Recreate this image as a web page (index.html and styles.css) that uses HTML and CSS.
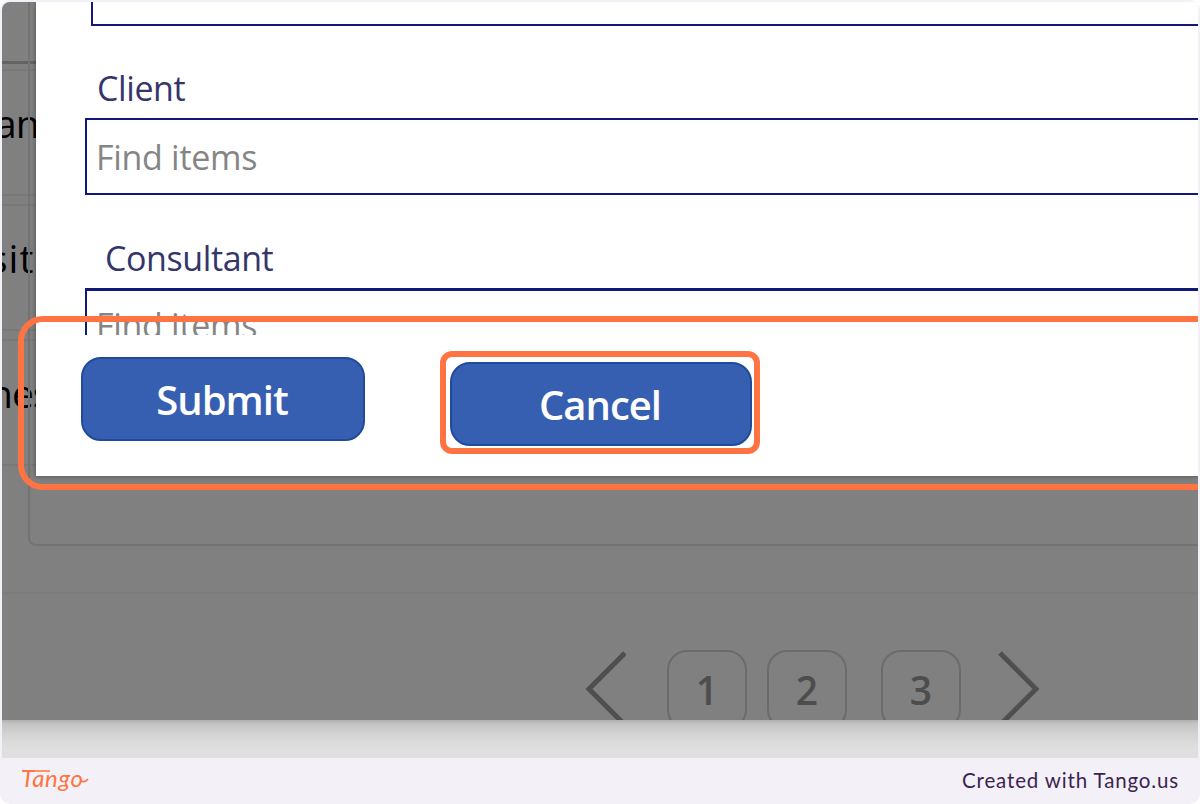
FILE: index.html
```html
<!DOCTYPE html>
<html lang="en">
<head>
  <meta charset="UTF-8">
  <meta name="viewport" content="width=device-width, initial-scale=1.0">
  <title>Cancel</title>
  <link rel="stylesheet" href="styles.css">
</head>
<body>
  <div class="card">
    <main class="shot">
      <div class="page">
        <div class="list">
          <div class="row first"></div>
          <div class="row"><span class="an">an</span></div>
          <div class="row"><span class="site">site</span></div>
          <div class="row last"><span class="nes">nes</span></div>
        </div>
        <nav class="pager">
          <svg class="arrow" width="42" height="76" viewBox="0 0 42 76"><path d="M41 2 5 38l36 36"/></svg>
          <span class="num">1</span>
          <span class="num">2</span>
          <span class="num wide">3</span>
          <svg class="arrow next" width="42" height="76" viewBox="0 0 42 76"><path d="M3 2l36 36L3 74"/></svg>
        </nav>
        <div class="panel"></div>
      </div>
      <div class="below"></div>

      <div class="modal">
        <div class="fields">
          <div class="field top"></div>
          <label class="label">Client</label>
          <div class="field"><span>Find items</span></div>
          <label class="label consultant">Consultant</label>
          <div class="field cut"><span>Find items</span></div>
        </div>
        <div class="actions">
          <button class="btn submit">Submit</button>
          <button class="btn cancel">Cancel</button>
        </div>
      </div>
      <div class="ring area"></div>
      <div class="ring target"></div>
    </main>
    <footer>
      <svg class="logo" width="72" height="36" viewBox="0 0 72 36">
        <text x="1" y="20" textLength="62">Tango</text>
        <path d="M2 4h28M61 14q4 2 7-2"/>
      </svg>
      <p>Created with Tango.us</p>
    </footer>
  </div>
</body>
</html>
```

FILE: styles.css
```css
* {
  box-sizing: border-box;
}
body {
  margin: 0;
  background: #fff;
  font-family: 'Open Sans', 'Noto Sans', sans-serif;
  overflow: hidden;
}
.card {
  display: flex;
  flex-direction: column;
  height: 804px;
  padding: 2px 2px 0;
  background: #f3f1f7;
  border-radius: 10px;
}
.shot {
  position: relative;
  height: 756px;
  overflow: hidden;
  border-radius: 8px 0 0 0;
  background: #dfdfdf;
}

/* dimmed page behind the dialog */
.page {
  position: relative;
  display: flex;
  flex-direction: column;
  height: 718px;
  overflow: hidden;
  background: #808080;
}
.list {
  flex: none;
  height: 592px;
  border-bottom: 2px solid #7c7c7c;
}
.row {
  height: 127px;
  margin-bottom: 8px;
  padding-top: 25px;
  border-top: 2px solid #797979;
  border-bottom: 2px solid #797979;
  font-size: 39px;
  font-weight: 500;
  line-height: 54px;
  letter-spacing: -1px;
  color: #000;
  white-space: nowrap;
}
.row.first {
  height: 62px;
  margin-bottom: 5px;
  border-top: 0;
  border-bottom: 3px solid #636363;
}
.row span {
  display: block;
}
.an {
  margin-left: -7px;
}
.site {
  margin-left: -13px;
  letter-spacing: 1px;
}
.nes {
  margin-left: -13px;
}
.panel {
  position: absolute;
  left: 26px;
  top: -20px;
  width: 1300px;
  height: 564px;
  border: 2px solid #737373;
  border-radius: 8px;
}
.pager {
  display: flex;
  flex: none;
  align-items: flex-start;
  padding: 56px 0 0 582px;
}
.arrow {
  flex: none;
  margin-top: 1px;
  fill: none;
  stroke: #4f4f4f;
  stroke-width: 5;
}
.num {
  flex: none;
  width: 80px;
  height: 80px;
  margin-left: 20px;
  border: 2px solid #6b6b6b;
  border-radius: 20px;
  font-size: 39px;
  font-weight: 600;
  line-height: 75px;
  text-align: center;
  color: #4d4d4d;
}
.arrow + .num {
  margin-left: 41px;
}
.num.wide {
  margin-left: 34px;
}
.arrow.next {
  margin-left: 36px;
}
.below {
  height: 38px;
  background: linear-gradient(#b0b0b0, #c3c3c3 10%, #d5d5d5 40%, #dfdfdf 75%);
}

/* dialog */
.modal {
  position: absolute;
  left: 34px;
  top: 0;
  right: 0;
  height: 474px;
  background: #fff;
  box-shadow: 0 0 5px rgba(0, 0, 0, 0.4);
}
.fields {
  height: 333px;
  padding-left: 49px;
  overflow: hidden;
}
.field {
  width: 1200px;
  height: 77px;
  padding-left: 9px;
  border: 2px solid #101878;
  font-size: 34px;
  line-height: 74px;
  letter-spacing: -0.3px;
  color: #858585;
}
.field.top {
  height: 24px;
  margin-left: 6px;
  border-top: 0;
}
.label {
  display: block;
  height: 92px;
  padding: 39px 0 0 12px;
  font-size: 34px;
  line-height: 46px;
  letter-spacing: -0.4px;
  color: #33356b;
}
.label.consultant {
  height: 93px;
  padding: 40px 0 0 20px;
}
.field.cut {
  border-top-width: 3px;
  line-height: 69px;
}
.actions {
  display: flex;
  align-items: flex-start;
  gap: 85px;
  padding: 22px 0 0 45px;
}
.btn {
  height: 84px;
  padding: 1px 2px 0 0;
  border: 2px solid #204b9b;
  border-radius: 20px;
  background: #365fb2;
  font-family: inherit;
  font-size: 40px;
  font-weight: 600;
  line-height: 80px;
  letter-spacing: -1px;
  color: #fff;
}
.submit {
  width: 284px;
}
.cancel {
  width: 302px;
  margin-top: 5px;
}

/* highlight outlines */
.ring {
  position: absolute;
  border: 6px solid #ff7442;
}
.area {
  left: 16px;
  top: 314px;
  width: 1300px;
  height: 174px;
  border-radius: 25px;
}
.target {
  left: 438px;
  top: 349px;
  width: 320px;
  height: 103px;
  border-radius: 12px;
}

footer {
  display: flex;
  flex: 1;
  align-items: center;
  justify-content: space-between;
  padding: 0 19px 0 18px;
}
footer p {
  margin: 0 0 2px;
  font-family: Lato, sans-serif;
  font-size: 20.5px;
  letter-spacing: 0.85px;
  color: #3c2451;
}
.logo {
  margin-top: 8px;
}
.logo text {
  font-family: Lato, sans-serif;
  font-size: 24px;
  font-style: italic;
  font-weight: 400;
  fill: #ff7442;
}
.logo path {
  fill: none;
  stroke: #ff7442;
  stroke-width: 1.6;
}
```
